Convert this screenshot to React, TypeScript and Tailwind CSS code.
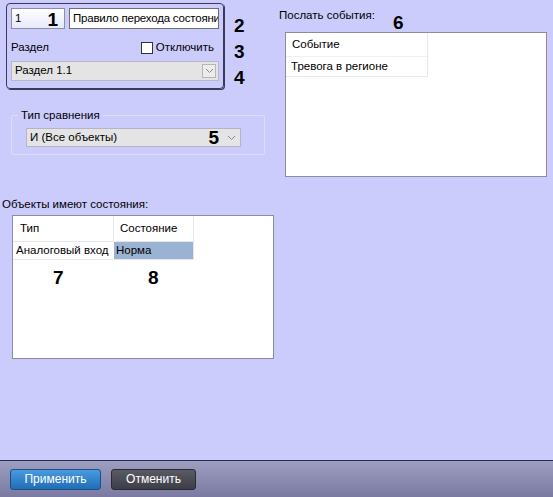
import React from "react";

const font = { fontFamily: '"Liberation Sans", Arial, sans-serif' };

function Chevron({ className = "" }: { className?: string }) {
  return (
    <svg width="9" height="6" viewBox="0 0 9 6" className={className}>
      <path d="M1 1 L4.5 4.5 L8 1" fill="none" stroke="#8a8a8a" strokeWidth="1" />
    </svg>
  );
}

function Mark({ n, className }: { n: string; className: string }) {
  return (
    <span className={`absolute text-[19px] font-bold leading-none text-black ${className}`}>
      {n}
    </span>
  );
}

export default function App() {
  return (
    <div
      className="w-[553px] h-[497px] flex flex-col bg-[#ccccfc] text-[11.5px] text-black overflow-hidden"
      style={font}
    >
      {/* Main area */}
      <div className="relative flex-1 flex">
        {/* Left column */}
        <div className="w-[280px] flex flex-col">
          {/* Rule group */}
          <div className="relative ml-[6px] mt-[3px] w-[218px] h-[86px] rounded-[4px] border border-[#3a3a58] shadow-[1px_1px_0_#3a3a58] px-[4px] pt-[4px] flex flex-col">
            <div className="flex gap-[4px]">
              <div className="relative w-[54px] h-[21px] border border-[#8d8da8] bg-gradient-to-b from-[#ffffff] to-[#e8e8fa] flex items-center pl-[3px]">
                1
                <Mark n="1" className="right-[6px] top-[1px]" />
              </div>
              <div className="flex-1 h-[21px] border border-[#6f6f6f] bg-white flex items-center pl-[3px] overflow-hidden whitespace-nowrap tracking-[-0.2px]">
                Правило перехода состояни
              </div>
            </div>
            <div className="flex items-center justify-between mt-[12px] h-[14px]">
              <span>Раздел</span>
              <label className="flex items-center gap-[3px] pr-[5px]">
                <span className="w-[12px] h-[12px] border border-[#333] bg-white" />
                Отключить
              </label>
            </div>
            <div className="mt-[6px] h-[20px] border border-[#b8b8c8] bg-[#e4e4e4] flex items-center justify-between pl-[3px] pr-[2px]">
              <span>Раздел 1.1</span>
              <span className="w-[14px] h-[14px] border border-[#b5b5b5] bg-[#ececec] flex items-center justify-center">
                <Chevron />
              </span>
            </div>
            <Mark n="2" className="left-[227px] top-[12px]" />
            <Mark n="3" className="left-[227px] top-[38px]" />
            <Mark n="4" className="left-[227px] top-[64px]" />
          </div>

          {/* Comparison type */}
          <div className="relative ml-[11px] mt-[26px] w-[254px] h-[40px] border border-[#dcdcf4] rounded-[2px]">
            <span className="absolute left-[6px] -top-[9px] px-[3px] bg-[#ccccfc]">Тип сравнения</span>
            <div className="ml-[14px] mt-[12px] w-[215px] h-[19px] border border-[#b4b4c4] bg-[#e4e4e4] flex items-center pl-[3px] pr-[4px]">
              <span className="flex-1">И (Все объекты)</span>
              <span className="text-[19px] font-bold leading-none mr-[8px]">5</span>
              <Chevron />
            </div>
          </div>

          {/* Objects */}
          <span className="ml-[2px] mt-[42px] leading-[14px]">Объекты имеют состояния:</span>
          <div className="relative ml-[12px] mt-[4px] w-[262px] h-[144px] border border-[#8c8c9c] bg-white">
            <div className="flex w-[181px] h-[26px] border-b border-[#e6e6ee]">
              <div className="w-[101px] border-r border-[#e6e6ee] pl-[7px] flex items-center">Тип</div>
              <div className="flex-1 pl-[6px] flex items-center border-r border-[#e6e6ee]">Состояние</div>
            </div>
            <div className="flex w-[181px] h-[18px] border-b border-[#e6e6ee]">
              <div className="w-[101px] pl-[3px] flex items-center whitespace-nowrap">Аналоговый вход</div>
              <div className="flex-1 pl-[2px] flex items-center bg-[#9bb3d3] border-r border-[#e6e6ee]">Норма</div>
            </div>
            <Mark n="7" className="left-[40px] top-[52px]" />
            <Mark n="8" className="left-[135px] top-[52px]" />
          </div>
        </div>

        {/* Right column */}
        <div className="flex flex-col ml-[-1px]">
          <div className="relative mt-[8px] h-[14px] leading-[14px]">
            Послать события:
            <Mark n="6" className="left-[114px] top-[5px]" />
          </div>
          <div className="ml-[6px] mt-[10px] w-[262px] h-[145px] border border-[#8c8c9c] bg-white">
            <div className="w-[142px] h-[44px] border-r border-b border-[#e6e6ee] flex flex-col">
              <div className="h-[25px] border-b border-[#f0f0f4] pl-[6px] flex items-center">Событие</div>
              <div className="h-[19px] pl-[5px] flex items-center">Тревога в регионе</div>
            </div>
          </div>
        </div>
      </div>

      {/* Bottom bar */}
      <div className="h-[37px] border-t border-[#2e2e3a] bg-gradient-to-b from-[#9e9ec2] to-[#7a7aa2] flex items-center gap-[10px] pl-[10px]">
        <button className="w-[91px] h-[21px] rounded-[3px] border border-[#1c4f86] bg-gradient-to-b from-[#4a9be0] to-[#1f6db5] text-white text-[12px]">
          Применить
        </button>
        <button className="w-[85px] h-[21px] rounded-[3px] border border-[#2a2a32] bg-gradient-to-b from-[#5a5a66] to-[#3e3e48] text-white text-[12px]">
          Отменить
        </button>
      </div>
    </div>
  );
}
